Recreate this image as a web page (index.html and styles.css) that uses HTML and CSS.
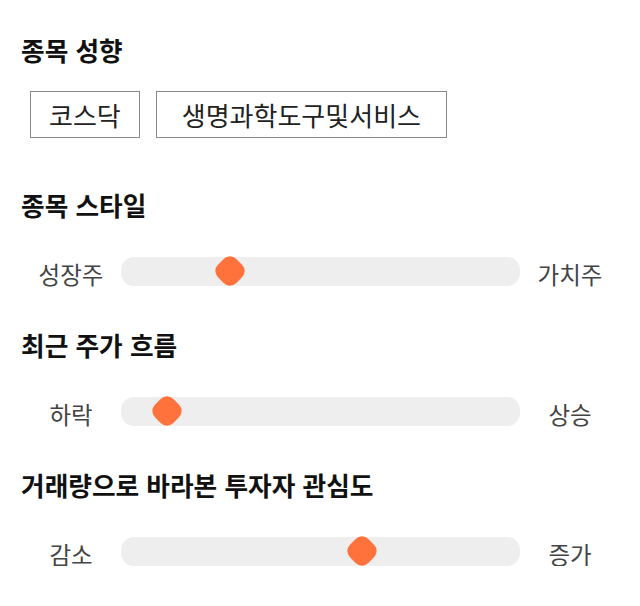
FILE: index.html
```html
<!DOCTYPE html>
<html lang="ko">
<head>
<meta charset="utf-8">
<link rel="stylesheet" href="styles.css">
</head>
<body>
<main class="page">
  <section class="block">
    <h2 class="title">종목 성향</h2>
    <div class="tags">
      <span class="tag">코스닥</span>
      <span class="tag tag-wide">생명과학도구및서비스</span>
    </div>
  </section>
  <section class="block">
    <h2 class="title">종목 스타일</h2>
    <div class="scale">
      <span class="label">성장주</span>
      <div class="track"><span class="thumb" style="left: 27.2%"></span></div>
      <span class="label">가치주</span>
    </div>
  </section>
  <section class="block">
    <h2 class="title">최근 주가 흐름</h2>
    <div class="scale">
      <span class="label">하락</span>
      <div class="track"><span class="thumb" style="left: 11.6%"></span></div>
      <span class="label">상승</span>
    </div>
  </section>
  <section class="block">
    <h2 class="title">거래량으로 바라본 투자자 관심도</h2>
    <div class="scale">
      <span class="label">감소</span>
      <div class="track"><span class="thumb" style="left: 60.4%"></span></div>
      <span class="label">증가</span>
    </div>
  </section>
</main>
</body>
</html>
```
FILE: styles.css
```css
* { box-sizing: border-box; }
html, body { margin: 0; padding: 0; background: #fff; }
body {
  font-family: "Noto Sans CJK KR", "Noto Sans", sans-serif;
  color: #111;
}
.page {
  padding: 35px 20px 0 21px;
  display: flex;
  flex-direction: column;
}
.block { display: flex; flex-direction: column; }
.block + .block { margin-top: 44px; }
.title {
  margin: 0;
  font-size: 25.7px;
  line-height: 30px;
  font-weight: 700;
  color: #111;
  white-space: nowrap;
}
.tags {
  display: flex;
  gap: 16px;
  margin: 26px 0 8px 9px;
}
.tag {
  height: 47px;
  display: flex;
  align-items: center;
  padding: 0 18px;
  border: 1px solid #8a8a8a;
  font-size: 26px;
  color: #222;
  white-space: nowrap;
}
.tag-wide { padding: 0 25px; }
.scale {
  display: flex;
  align-items: center;
  margin-top: 36px;
  height: 30px;
}
.label {
  width: 100px;
  text-align: center;
  font-size: 23.5px;
  line-height: 30px;
  color: #444;
  padding-top: 6px;
  white-space: nowrap;
}
.track {
  flex: 1;
  height: 29px;
  border-radius: 13px;
  background: #eeeeee;
  position: relative;
}
.thumb {
  position: absolute;
  top: 50%;
  width: 26px;
  height: 26px;
  background: #ff723b;
  border-radius: 9px;
  transform: translate(-50%, -50%) rotate(45deg);
}
```
